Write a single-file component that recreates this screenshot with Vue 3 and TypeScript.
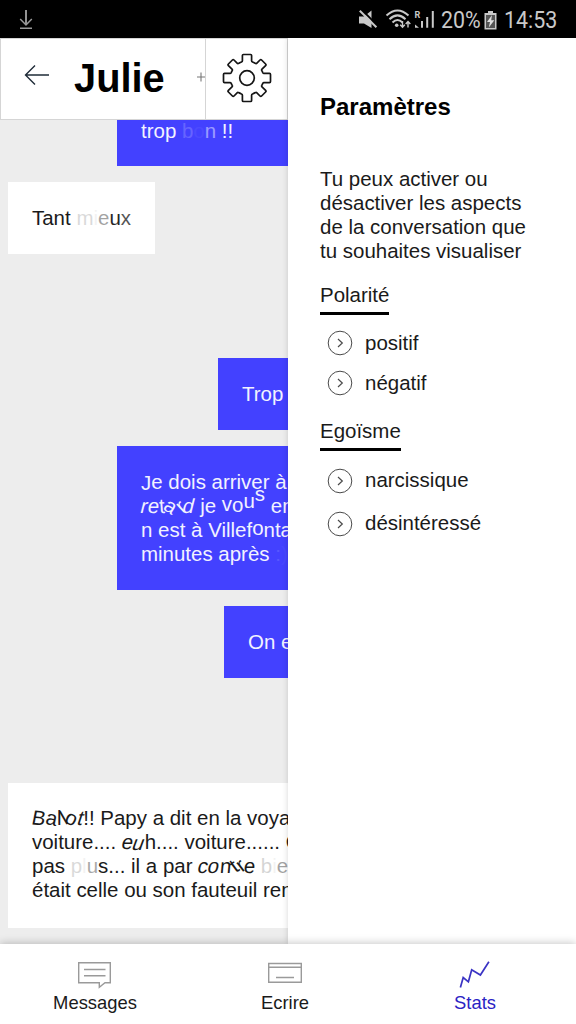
<script setup lang="ts">
interface Glyph {
  c: string
  o?: number
  r?: number
  s?: number
  x?: number
  y?: number
}
type Part = string | Glyph[]
interface Bubble {
  id: string
  mine: boolean
  lines: Part[][]
}

const bubbles: Bubble[] = [
  { id: 'bon', mine: true, lines: [['trop ', [{ c: 'b', o: 0.2 }, { c: 'o', o: 0.05 }, { c: 'n', o: 0.5 }], ' !!']] },
  { id: 'tant', mine: false, lines: [['Tant ', [{ c: 'm', o: 0.16 }, { c: 'i', o: 0.05 }, { c: 'e', o: 0.4 }, { c: 'u', o: 0.95 }, { c: 'x', o: 0.75 }]]] },
  { id: 'trop', mine: true, lines: [['Trop']] },
  {
    id: 'retard',
    mine: true,
    lines: [
      [[{ c: 'J', y: 1 }, { c: 'e' }], ' dois arriver à'],
      [
        [{ c: 'r', s: -14 }, { c: 'e', s: -8 }, { c: 't', s: 4 }, { c: 'a', r: 32 }, { c: 'r', r: -42, x: 1 }, { c: 'd', s: -14 }],
        ' je ',
        [{ c: 'v', y: -2 }, { c: 'o', y: -1 }, { c: 'u', y: -5 }, { c: 's', y: -12 }],
        ' en',
      ],
      ['n est à Villef', [{ c: 'o', y: -2 }], 'ntaine'],
      ['minutes après ', [{ c: ':', o: 0.12 }, { c: ')', o: 0.03 }]],
    ],
  },
  { id: 'est', mine: true, lines: [['On est']] },
  {
    id: 'papy',
    mine: false,
    lines: [
      [
        [{ c: 'B', s: -6, r: 5 }, { c: 'a', r: 12 }, { c: 'l' }, { c: 'l', r: -30, x: -0.5 }, { c: 'o', r: 25 }, { c: 't', s: -18 }],
        '!! Papy a dit en la voyant',
      ],
      ['voiture.... ', [{ c: 'e', s: -12 }, { c: 'u', s: -20, y: 1 }], 'h.... voiture...... On'],
      [
        'pas ',
        [{ c: 'p', o: 0.16 }, { c: 'l', o: 0.05 }, { c: 'u', o: 0.38 }],
        's... il a par ',
        [{ c: 'c', s: -12 }, { c: 'o', s: -12 }, { c: 'n', s: -5 }, { c: 't', r: -36 }, { c: 'r', r: -38, y: -1 }, { c: 'e', s: -6 }],
        ' ',
        [{ c: 'b', o: 0.18 }, { c: 'i', o: 0.05 }, { c: 'e', o: 0.4 }, { c: 'n', o: 0.8 }],
      ],
      ['était celle ou son fauteuil rentre'],
    ],
  },
]

const groups = [
  { id: 'polarite', title: 'Polarité', items: ['positif', 'négatif'] },
  { id: 'egoisme', title: 'Egoïsme', items: ['narcissique', 'désintéressé'] },
]

function glyphStyle(g: Glyph) {
  return {
    opacity: g.o ?? 1,
    transform: `translate(${g.x ?? 0}px, ${g.y ?? 0}px) rotate(${g.r ?? 0}deg) skewX(${g.s ?? 0}deg)`,
  }
}
</script>

<template>
  <div class="screen">
    <div class="status">
      <svg class="download" width="16" height="22" viewBox="0 0 16 22" fill="none" stroke="#999" stroke-width="1.5">
        <path d="M8 1V16" stroke="#c4c4c4" /><path d="M2.2 10L8 16L13.8 10M2 19.2H14" />
      </svg>
      <svg class="sys" width="83" height="22" viewBox="0 0 83 22" fill="none" stroke="#c9c9c9">
        <path d="M1 7.5H6L13.5 1.5V19L6 14.5H1Z" fill="#c9c9c9" stroke="none" />
        <path d="M3.2 .3L19.8 16.9" stroke="#000" stroke-width="2" />
        <path d="M1.8 1.7L18.4 18.3" stroke-width="2" />
        <path d="M28.5 6.5Q39.5 -3.5 50.5 6.5M31.5 10.2Q39.5 2.5 47.5 10.2M34.5 13.5Q39.5 8.5 44.5 13.5" stroke-width="2" />
        <circle cx="38.7" cy="16.3" r="1.8" fill="#c9c9c9" stroke="none" />
        <path d="M44.5 12V18M42.2 15.7L44.5 18.2L46.8 15.7M50 18.5V12.5M47.7 15L50 12.5L52.3 15" stroke-width="1.4" />
        <path d="M57 18.7V15.5L61 18.7Z" fill="#c9c9c9" stroke="none" />
        <path d="M64 18.7V12M69.2 18.7V8M74.8 18.7V2" stroke-width="2" />
        <text x="56.5" y="8.5" class="roam" fill="#c9c9c9" stroke="none">R</text>
      </svg>
      <span class="pct"><span class="narrow">20%</span></span>
      <svg class="battery" width="13" height="19" viewBox="0 0 13 19">
        <path d="M4 0H9V2H12.5V18.5H.5V2H4Z" fill="#c9c9c9" />
        <path d="M2 4H11V17H2Z" fill="#555" />
        <path d="M8 4L3 11H6L4.8 16.5L10.3 9.2H7.2Z" fill="#e0e0e0" />
      </svg>
      <span class="narrow">14:53</span>
    </div>

    <div class="main">
      <section class="left">
        <header class="head">
          <svg class="back" width="26" height="22" viewBox="0 0 26 22" fill="none" stroke="#1f2c38" stroke-width="1.4">
            <path d="M25 11H1.5M11 1.5L1.5 11L11 20.5" />
          </svg>
          <h1>Julie</h1>
          <svg class="plus" width="8" height="10" viewBox="0 0 8 10" stroke="#777" stroke-width="1.1">
            <path d="M0 5H8M4 .5V9.5" />
          </svg>
          <div class="gear">
            <svg width="50" height="50" viewBox="-25 -25 50 50" fill="none" stroke="#151515" stroke-width="1.7" stroke-linejoin="round">
              <circle r="7.3" />
              <path d="M-4.6 -22.5Q-4.6 -23.5 -3.6 -23.5H3.6Q4.6 -23.5 4.6 -22.5V-17.2Q4.6 -16.3 5.5 -16Q7.5 -15.2 8.5 -14.6Q9.2 -14.1 9.9 -14.8L13 -18Q13.8 -18.8 14.6 -18L18.6 -14Q19.4 -13.2 18.6 -12.4L15 -8.8Q14.3 -8.1 14.8 -7.4Q15.4 -6.3 15.8 -5.4Q16.2 -4.6 17 -4.6H22.5Q23.5 -4.6 23.5 -3.6V3.6Q23.5 4.6 22.5 4.6H17Q16.2 4.6 15.8 5.4Q15.4 6.3 14.8 7.4Q14.3 8.1 15 8.8L18.6 12.4Q19.4 13.2 18.6 14L14.6 18Q13.8 18.8 13 18L9.9 14.8Q9.2 14.1 8.5 14.6Q7.5 15.2 5.5 16Q4.6 16.3 4.6 17.2V22.5Q4.6 23.5 3.6 23.5H-3.6Q-4.6 23.5 -4.6 22.5V17.2Q-4.6 16.3 -5.5 16Q-7.5 15.2 -8.5 14.6Q-9.2 14.1 -9.9 14.8L-13 18Q-13.8 18.8 -14.6 18L-18.6 14Q-19.4 13.2 -18.6 12.4L-15 8.8Q-14.3 8.1 -14.8 7.4Q-15.4 6.3 -15.8 5.4Q-16.2 4.6 -17 4.6H-22.5Q-23.5 4.6 -23.5 3.6V-3.6Q-23.5 -4.6 -22.5 -4.6H-17Q-16.2 -4.6 -15.8 -5.4Q-15.4 -6.3 -14.8 -7.4Q-14.3 -8.1 -15 -8.8L-18.6 -12.4Q-19.4 -13.2 -18.6 -14L-14.6 -18Q-13.8 -18.8 -13 -18L-9.9 -14.8Q-9.2 -14.1 -8.5 -14.6Q-7.5 -15.2 -5.5 -16Q-4.6 -16.3 -4.6 -17.2Z" />
            </svg>
          </div>
        </header>
        <div class="chat">
          <div v-for="b in bubbles" :key="b.id" class="bubble" :class="[b.id, { mine: b.mine }]">
            <div v-for="(line, i) in b.lines" :key="i" class="line">
              <template v-for="(part, j) in line" :key="j">
                <span v-if="typeof part === 'string'">{{ part }}</span>
                <template v-else>
                  <span v-for="(g, k) in part" :key="k" class="glyph" :style="glyphStyle(g)">{{ g.c }}</span>
                </template>
              </template>
            </div>
          </div>
        </div>
      </section>

      <aside class="panel">
        <h2>Paramètres</h2>
        <p>Tu peux activer ou<br />désactiver les aspects<br />de la conversation que<br />tu souhaites visualiser</p>
        <div v-for="g in groups" :key="g.id" class="group" :class="g.id">
          <h3>{{ g.title }}</h3>
          <div v-for="item in g.items" :key="item" class="option">
            <svg width="26" height="26" viewBox="0 0 26 26" fill="none" stroke="#4a4a4a">
              <circle cx="13" cy="13" r="11.8" stroke-width="1" />
              <path d="M11 9L15.3 13L11 17" stroke-width="1.2" />
            </svg>
            <span>{{ item }}</span>
          </div>
        </div>
      </aside>
    </div>

    <nav class="tabs">
      <div class="tab">
        <svg width="34" height="28" viewBox="0 0 34 28" fill="none" stroke="#9a9a9a" stroke-width="1.4">
          <path d="M.7 1.7H32.3V21.8H27L21.3 26.4V21.8H.7ZM6 8.5H27.5M6 14.8H27.5" />
        </svg>
        <span>Messages</span>
      </div>
      <div class="tab">
        <svg width="36" height="28" viewBox="0 0 36 28" fill="none" stroke="#9a9a9a" stroke-width="1.4">
          <path d="M1.7 2.5H34.3V21.3H1.7ZM1.7 6.3H34.3M9 16.5H27" />
        </svg>
        <span>Ecrire</span>
      </div>
      <div class="tab active">
        <svg width="32" height="28" viewBox="0 0 32 28" fill="none" stroke="#3a33c4" stroke-width="1.7">
          <path d="M1.4 26.5L4.2 16.5L9.4 20.8L12.7 8.8L21.4 14L29.9 .8" />
        </svg>
        <span>Stats</span>
      </div>
    </nav>
  </div>
</template>

<style>
body { margin: 0; overflow: hidden; }
</style>

<style scoped>
.screen {
  width: 576px;
  height: 1024px;
  display: flex;
  flex-direction: column;
  overflow: hidden;
  background: #fff;
  font: 20.48px/24px "Liberation Sans", Arial, sans-serif;
  color: #1a1a1a;
}
.status {
  height: 38px;
  box-sizing: border-box;
  padding-top: 2px;
  flex: none;
  display: flex;
  align-items: center;
  background: #000;
  color: #c9c9c9;
  font: 23.5px/36px Roboto, sans-serif;
}
.download { margin-left: 18px; }
.sys { margin-left: 324px; flex: none; }
.roam { font: bold 9px Roboto, sans-serif; }
.pct { width: 43px; flex: none; }
.narrow { display: inline-block; transform: scaleX(.91); transform-origin: left; }
.battery { margin-right: 7px; flex: none; }
.main { flex: 1; min-height: 0; display: flex; }
.left {
  width: 288px;
  display: flex;
  flex-direction: column;
  overflow: hidden;
  background: #ededed;
}
.head {
  height: 82px;
  flex: none;
  display: flex;
  align-items: center;
  box-sizing: border-box;
  border: 1px solid #d5d5d5;
  background: #fff;
}
.back { margin: -9px 0 0 23px; flex: none; }
h1 { width: 123px; margin: 0 0 3px 24px; font-size: 39.8px; line-height: 48px; color: #000; }
.plus { margin-top: -4px; flex: none; }
.gear {
  flex: 1;
  height: 80px;
  padding-bottom: 2px;
  box-sizing: border-box;
  display: flex;
  align-items: center;
  justify-content: center;
  border-left: 1px solid #d5d5d5;
}
.chat {
  flex: 1;
  min-height: 0;
  display: flex;
  flex-direction: column;
  align-items: flex-start;
  white-space: pre;
}
.bubble {
  flex: none;
  box-sizing: border-box;
  margin: 16px 0 0 8px;
  padding: 24px;
  background: #fff;
}
.mine { background: #4341ff; color: #f2f2ff; }
.line { height: 24px; }
.glyph { display: inline-block; line-height: 24px; }
.bon { margin: 0 0 0 117px; padding-top: 0; height: 46px; width: 220px; line-height: 22px; }
.bon .line { height: 22px; }
.bon .glyph { line-height: 22px; }
.tant { width: 147px; }
.trop { margin: 104px 0 0 218px; width: 120px; }
.retard { margin-left: 117px; width: 240px; }
.est { margin-left: 224px; width: 120px; }
.papy { margin-top: 105px; padding-top: 23px; width: 340px; height: 145px; }
.panel {
  width: 288px;
  box-sizing: border-box;
  padding: 53px 32px 0;
  background: #fff;
  box-shadow: 0 0 6px rgba(0, 0, 0, .16);
  z-index: 1;
}
h2 { margin: 0 0 44px; font-size: 24px; line-height: 32px; color: #000; }
p { margin: 0 0 20px; white-space: nowrap; }
h3 {
  width: max-content;
  margin: 0;
  padding-bottom: 5px;
  font-size: 20.48px;
  font-weight: 400;
  line-height: 24px;
  border-bottom: 3px solid #000;
}
.option { height: 26px; display: flex; align-items: center; gap: 12px; margin-left: 7px; }
.polarite .option { margin-top: 14px; }
.polarite .option:nth-child(2) { margin-top: 15px; }
.egoisme { margin-top: 23px; }
.egoisme .option { margin-top: 17px; }
.egoisme .option span { margin-top: -3px; }
.tabs {
  height: 80px;
  flex: none;
  display: flex;
  padding-right: 6px;
  background: #fff;
  box-shadow: 0 -1px 8px rgba(0, 0, 0, .22);
  z-index: 2;
}
.tab {
  flex: 1;
  display: flex;
  flex-direction: column;
  align-items: center;
  padding-top: 17px;
  font-size: 18.4px;
  line-height: 28px;
}
.active { color: #2a22c4; }
</style>
